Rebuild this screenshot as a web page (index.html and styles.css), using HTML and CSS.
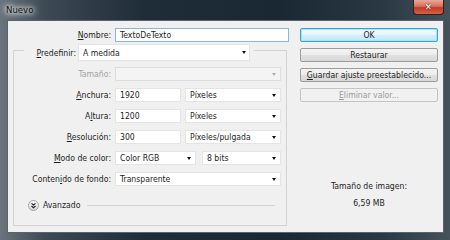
FILE: index.html
```html
<!DOCTYPE html>
<html>
<head>
    <meta charset="UTF-8">
    <title>Nuevo</title>
    <link rel="stylesheet" href="styles.css">
</head>
<body>
    <div class="window">
        <!-- Title bar -->
        <div class="titlebar">
            <span class="title">Nuevo</span>
            <span class="close">&#x2715;</span>
        </div>

        <div class="client">
            <!-- Left: form -->
            <div class="main">
                <div class="row">
                    <label class="lbl"><u>N</u>ombre:</label>
                    <div class="field name">TextoDeTexto</div>
                </div>

                <fieldset class="group">
                    <legend class="preset">
                        <label class="lbl"><u>P</u>redefinir:</label>
                        <div class="field sel preset-sel">A medida</div>
                    </legend>

                    <div class="rows">
                        <div class="row">
                            <label class="lbl off">Tamaño:</label>
                            <div class="field sel wide disabled"></div>
                        </div>
                        <div class="row">
                            <label class="lbl"><u>A</u>nchura:</label>
                            <div class="field num">1920</div>
                            <div class="field sel unit">Píxeles</div>
                        </div>
                        <div class="row">
                            <label class="lbl">A<u>l</u>tura:</label>
                            <div class="field num">1200</div>
                            <div class="field sel unit">Píxeles</div>
                        </div>
                        <div class="row">
                            <label class="lbl"><u>R</u>esolución:</label>
                            <div class="field num">300</div>
                            <div class="field sel unit">Píxeles/pulgada</div>
                        </div>
                        <div class="row">
                            <label class="lbl"><u>M</u>odo de color:</label>
                            <div class="field sel mode">Color RGB</div>
                            <div class="field sel bits">8 bits</div>
                        </div>
                        <div class="row">
                            <label class="lbl">Conten<u>i</u>do de fondo:</label>
                            <div class="field sel wide">Transparente</div>
                        </div>
                    </div>

                    <div class="advanced">
                        <svg class="adv-icon" width="11" height="11" viewBox="0 0 11 11">
                            <defs>
                                <linearGradient id="ball" x1="0" y1="0" x2="0" y2="1">
                                    <stop offset="0" stop-color="#ffffff"/>
                                    <stop offset="1" stop-color="#d6d6d6"/>
                                </linearGradient>
                            </defs>
                            <circle cx="5.5" cy="5.5" r="5" fill="url(#ball)" stroke="#a3a3a3"/>
                            <path d="M3.5 3.3 L5.5 5 L7.5 3.3 M3.5 6 L5.5 7.7 L7.5 6" fill="none" stroke="#222" stroke-width="1.1"/>
                        </svg>
                        <span>Avanzado</span>
                        <div class="adv-line"></div>
                    </div>
                </fieldset>
            </div>

            <!-- Right: buttons -->
            <div class="side">
                <div class="btn default">OK</div>
                <div class="btn">Restaurar</div>
                <div class="btn"><u>G</u>uardar ajuste preestablecido...</div>
                <div class="btn off"><u>E</u>liminar valor...</div>

                <div class="info">
                    <div>Tamaño de imagen:</div>
                    <div class="size">6,59 MB</div>
                </div>
            </div>
        </div>
    </div>
</body>
</html>
```

FILE: styles.css
```css
body {
    margin: 0;
    font-family: "DejaVu Sans Condensed", "Liberation Sans", sans-serif;
    font-size: 8.6px;
    color: #1e1e1e;
}
.window {
    width: 450px;
    height: 240px;
    box-sizing: border-box;
    padding: 0 6px 7px 7px;
    display: flex;
    flex-direction: column;
    background: linear-gradient(90deg, #6b747c 0%, #3d4953 10%, #1f2d39 32%, #1a2834 62%, #293843 85%, #46525b 100%);
}
.titlebar {
    height: 20px;
    display: flex;
    justify-content: space-between;
    align-items: flex-start;
}
.title {
    margin: 4px 0 0 -1px;
    font-size: 9.5px;
    color: #101010;
    text-shadow: 0 0 4px #fff, 0 0 6px #fff, 0 0 8px #dfe6ec;
}
.close {
    width: 31px;
    height: 15px;
    box-sizing: border-box;
    border: 1px solid #3a1c18;
    border-top: none;
    border-radius: 0 0 4px 4px;
    background: linear-gradient(#e9a99a 0%, #d7705d 45%, #c23a23 55%, #d0634a 100%);
    color: #fff;
    font-size: 9px;
    font-weight: bold;
    text-align: center;
    line-height: 14px;
    text-shadow: 0 0 2px #400;
}
.client {
    flex: 1;
    display: flex;
    gap: 11px;
    padding: 7px 5px 0 5px;
    background: #f0f0f0;
    border: 1px solid #59636c;
}
.main {
    width: 276px;
    display: flex;
    flex-direction: column;
}
.row {
    display: flex;
    align-items: center;
    gap: 4px;
    height: 14px;
}
.lbl {
    width: 98px;
    text-align: right;
    white-space: nowrap;
}
.lbl.off {
    color: #a2a2a2;
}
.field {
    position: relative;
    height: 14px;
    box-sizing: border-box;
    display: flex;
    align-items: center;
    padding: 0 4px;
    background: #fff;
    border: 1px solid #e4e4e4;
    white-space: nowrap;
}
.field.name {
    width: 174px;
    border-color: #86b9e0;
}
.sel::after {
    content: "";
    position: absolute;
    right: 4px;
    top: 5px;
    border-left: 2.5px solid transparent;
    border-right: 2.5px solid transparent;
    border-top: 3px solid #111;
}
.sel.disabled {
    background: #f4f4f4;
    border-color: #dcdcdc;
}
.sel.disabled::after {
    border-top-color: #b0b0b0;
}

/* group box */
.group {
    margin: -2px 2px 0 0;
    padding: 6px 0 14px 0;
    min-width: 0;
    border: 1px solid #d3d3d3;
}
.preset {
    margin-left: 10px;
    padding: 4px 4px 0 0;
    display: flex;
    align-items: center;
    gap: 2px;
}
.preset .lbl {
    width: 52px;
}
.preset-sel {
    width: 172px;
    height: 17px;
}
.preset-sel::after {
    right: 3px;
    top: 6px;
}
.group .rows {
    display: flex;
    flex-direction: column;
    gap: 7px;
}
.group .rows .lbl {
    width: 97px;
}
.wide {
    width: 166px;
}
.num {
    width: 66px;
}
.unit {
    width: 96px;
}
.mode {
    width: 81px;
}
.bits {
    width: 79px;
    margin-left: 2px;
}
.advanced {
    margin-top: 13px;
    padding-left: 14px;
    height: 12px;
    display: flex;
    align-items: center;
    gap: 4px;
}
.adv-line {
    flex: 1;
    height: 1px;
    margin: 0 11px 0 3px;
    background: #d3d3d3;
}

/* buttons */
.side {
    width: 138px;
    display: flex;
    flex-direction: column;
    gap: 6px;
}
.btn {
    height: 14px;
    box-sizing: border-box;
    border: 1px solid #9c9c9c;
    border-radius: 2px;
    background: linear-gradient(#f4f4f4 0%, #ececec 50%, #e0e0e0 51%, #d8d8d8 100%);
    display: flex;
    align-items: center;
    justify-content: center;
    white-space: nowrap;
}
.btn.default {
    border-color: #33a3dc;
    box-shadow: inset 0 0 0 1px #a8e3fa;
    background: linear-gradient(#f3fbfe 0%, #e6f6fd 50%, #d2eefb 51%, #c5e6f7 100%);
}
.btn.off {
    color: #9a9a9a;
    border-color: #c4c4c4;
    background: #f1f1f1;
}
.info {
    margin-top: 72px;
    text-align: center;
    line-height: 13px;
}
.info .size {
    margin-top: 4px;
}
```
